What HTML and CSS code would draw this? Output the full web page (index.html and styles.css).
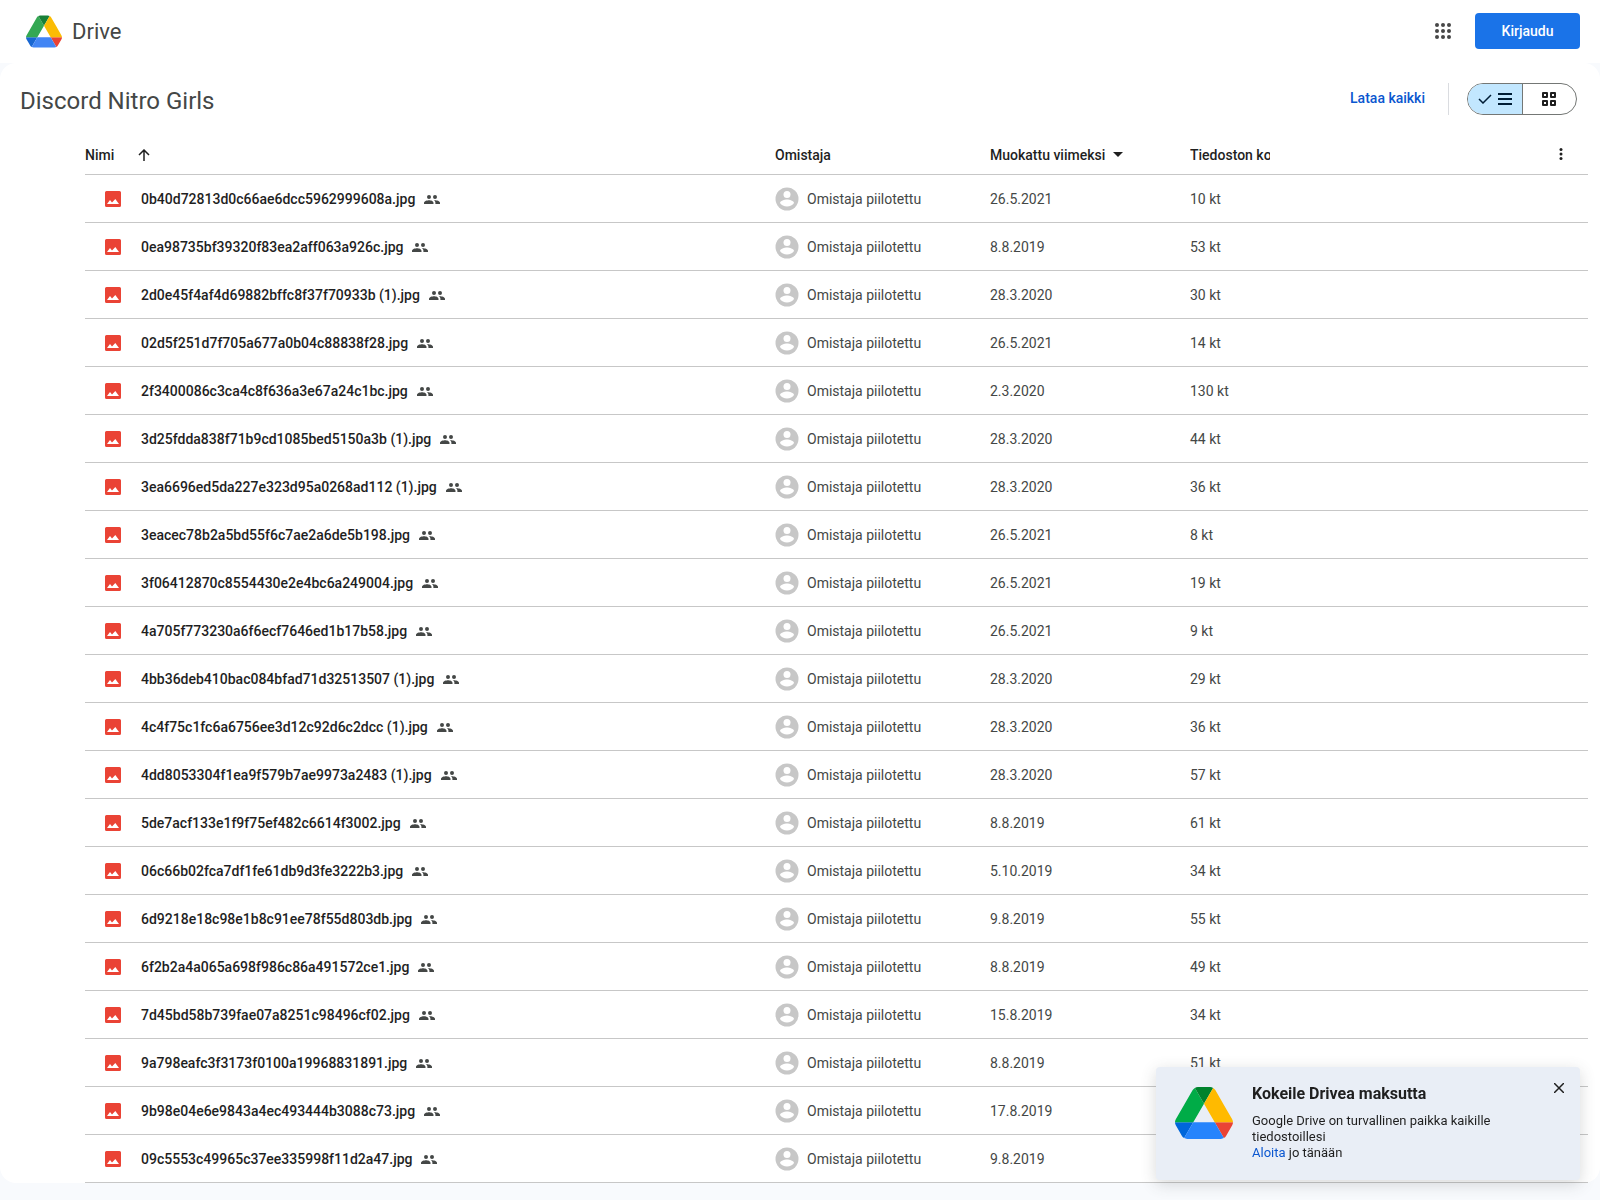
FILE: index.html
```
<!DOCTYPE html>
<html lang="fi">
<head>
<meta charset="utf-8">
<title>Discord Nitro Girls – Google Drive</title>
<link rel="stylesheet" href="styles.css">
</head>
<body>
<svg class="sprite" aria-hidden="true">
  <symbol id="image" viewBox="0 0 16 16"><path fill="#ea4335" d="M1.500 0h13A1.500 1.500 0 0 1 16 1.500v13a1.500 1.500 0 0 1-1.500 1.500h-13A1.500 1.500 0 0 1 0 14.500v-13A1.500 1.500 0 0 1 1.500 0z"/><path fill="#fff" d="M2 13l3-4 2 2.500L10.300 8 14 13z"/></symbol>
  <symbol id="people" viewBox="0 0 16 16"><path d="M5 8a2 2 0 1 0 0-4 2 2 0 0 0 0 4zM11 8a2 2 0 1 0 0-4 2 2 0 0 0 0 4zM5 9.200c-1.670 0-5 .83-5 2.500V13h9.500v-1.300C9.500 10.030 6.670 9.200 5 9.200zM11 9.200l-1.200.1c1 .6 1.600 1.400 1.600 2.400V13H16v-1.300c0-1.670-3.330-2.500-5-2.500z"/></symbol>
  <symbol id="person" viewBox="0 0 24 24"><circle cx="12" cy="12" r="11.500" fill="#c7c7c7"/><circle cx="12" cy="7.500" r="3.500" fill="#fff"/><path fill="#fff" d="M5 16c0-2.300 4.600-3.600 7-3.600s7 1.300 7 3.600c-1.400 2.200-4 3.600-7 3.600S6.400 18.200 5 16z"/></symbol>
</svg>

<header class="topbar">
  <a class="brand" href="#">
    <svg class="brand-logo" viewBox="0 0 87.3 78" aria-hidden="true">
      <path fill="#1967d2" d="m6.600 66.850 3.850 6.650c.8 1.400 1.950 2.500 3.300 3.300l13.750-23.800h-27.500c0 1.550.4 3.100 1.200 4.500z"/>
      <path fill="#34a853" d="m43.650 25-13.750-23.800c-1.350.8-2.500 1.900-3.300 3.300l-25.400 44a9.060 9.060 0 0 0-1.200 4.500h27.500z"/>
      <path fill="#ea4335" d="m73.550 76.800c1.350-.8 2.500-1.900 3.300-3.300l9.250-16c.8-1.400 1.200-2.950 1.200-4.500h-27.500z"/>
      <path fill="#188038" d="m43.650 25 13.750-23.800c-1.350-.8-2.900-1.200-4.500-1.200h-18.500c-1.600 0-3.150.45-4.500 1.200z"/>
      <path fill="#4285f4" d="m59.800 53h-32.300l-13.750 23.800c1.350.8 2.900 1.200 4.500 1.200h50.800c1.600 0 3.150-.45 4.500-1.200z"/>
      <path fill="#fbbc04" d="m73.400 26.500-12.700-22c-.8-1.400-1.950-2.500-3.300-3.300l-13.750 23.800 16.150 28h27.450c0-1.550-.4-3.100-1.200-4.500z"/>
    </svg>
    <span>Drive</span>
  </a>
  <div class="account">
    <button class="icon-button" type="button" aria-label="Google-sovellukset">
      <svg width="24" height="24" viewBox="0 0 24 24" fill="#474747"><circle cx="6" cy="6" r="2"/><circle cx="12" cy="6" r="2"/><circle cx="18" cy="6" r="2"/><circle cx="6" cy="12" r="2"/><circle cx="12" cy="12" r="2"/><circle cx="18" cy="12" r="2"/><circle cx="6" cy="18" r="2"/><circle cx="12" cy="18" r="2"/><circle cx="18" cy="18" r="2"/></svg>
    </button>
    <button class="sign-in" type="button">Kirjaudu</button>
  </div>
</header>

<main class="panel">
  <div class="toolbar">
    <h1 class="folder-title">Discord Nitro Girls</h1>
    <div class="actions">
      <button class="download" type="button">Lataa kaikki</button>
      <div class="view-toggle">
        <button class="view view-selected" type="button" aria-pressed="true" aria-label="Luettelo">
          <svg width="14" height="10" viewBox="0 0 14 10" fill="none" stroke="#001d35" stroke-width="1.500"><path d="M1 5l4 4 8-8"/></svg>
          <svg width="14" height="12" viewBox="0 0 14 12" fill="#001d35"><path d="M0 0h14v2H0zM0 5h14v2H0zM0 10h14v2H0z"/></svg>
        </button>
        <button class="view" type="button" aria-pressed="false" aria-label="Ruudukko">
          <svg width="14" height="14" viewBox="0 0 14 14" fill="none" stroke="#1f1f1f" stroke-width="2"><path stroke-linejoin="round" d="M1 1h4v4H1zM9 1h4v4H9zM1 9h4v4H1zM9 9h4v4H9z"/></svg>
        </button>
      </div>
    </div>
  </div>

  <table class="files">
    <thead>
      <tr>
        <th class="col-name"><div class="head">Nimi
          <svg class="sort-arrow" width="12" height="12" viewBox="0 0 12 12" fill="none" stroke="#1f1f1f" stroke-width="1.500"><path d="M6 12V1M1 6l5-5 5 5"/></svg></div></th>
        <th class="col-owner">Omistaja</th>
        <th class="col-date"><div class="head">Muokattu viimeksi
          <svg class="caret" width="10" height="5" viewBox="0 0 10 5"><path fill="#1f1f1f" d="M0 0h10L5 5z"/></svg></div></th>
        <th class="col-size"><div class="head-end"><span class="clipped">Tiedoston koko</span>
          <button class="icon-button more" type="button" aria-label="Lisää">
            <svg width="4" height="12" viewBox="0 0 4 12" fill="#1f1f1f"><circle cx="2" cy="1.500" r="1.500"/><circle cx="2" cy="6" r="1.500"/><circle cx="2" cy="10.500" r="1.500"/></svg>
          </button></div></th>
      </tr>
    </thead>
    <tbody>
      <tr><td><div class="file"><svg class="type"><use href="#image"/></svg>0b40d72813d0c66ae6dcc5962999608a.jpg<svg class="shared"><use href="#people"/></svg></div></td><td><div class="owner"><svg class="avatar"><use href="#person"/></svg>Omistaja piilotettu</div></td><td>26.5.2021</td><td>10 kt</td></tr>
      <tr><td><div class="file"><svg class="type"><use href="#image"/></svg>0ea98735bf39320f83ea2aff063a926c.jpg<svg class="shared"><use href="#people"/></svg></div></td><td><div class="owner"><svg class="avatar"><use href="#person"/></svg>Omistaja piilotettu</div></td><td>8.8.2019</td><td>53 kt</td></tr>
      <tr><td><div class="file"><svg class="type"><use href="#image"/></svg>2d0e45f4af4d69882bffc8f37f70933b (1).jpg<svg class="shared"><use href="#people"/></svg></div></td><td><div class="owner"><svg class="avatar"><use href="#person"/></svg>Omistaja piilotettu</div></td><td>28.3.2020</td><td>30 kt</td></tr>
      <tr><td><div class="file"><svg class="type"><use href="#image"/></svg>02d5f251d7f705a677a0b04c88838f28.jpg<svg class="shared"><use href="#people"/></svg></div></td><td><div class="owner"><svg class="avatar"><use href="#person"/></svg>Omistaja piilotettu</div></td><td>26.5.2021</td><td>14 kt</td></tr>
      <tr><td><div class="file"><svg class="type"><use href="#image"/></svg>2f3400086c3ca4c8f636a3e67a24c1bc.jpg<svg class="shared"><use href="#people"/></svg></div></td><td><div class="owner"><svg class="avatar"><use href="#person"/></svg>Omistaja piilotettu</div></td><td>2.3.2020</td><td>130 kt</td></tr>
      <tr><td><div class="file"><svg class="type"><use href="#image"/></svg>3d25fdda838f71b9cd1085bed5150a3b (1).jpg<svg class="shared"><use href="#people"/></svg></div></td><td><div class="owner"><svg class="avatar"><use href="#person"/></svg>Omistaja piilotettu</div></td><td>28.3.2020</td><td>44 kt</td></tr>
      <tr><td><div class="file"><svg class="type"><use href="#image"/></svg>3ea6696ed5da227e323d95a0268ad112 (1).jpg<svg class="shared"><use href="#people"/></svg></div></td><td><div class="owner"><svg class="avatar"><use href="#person"/></svg>Omistaja piilotettu</div></td><td>28.3.2020</td><td>36 kt</td></tr>
      <tr><td><div class="file"><svg class="type"><use href="#image"/></svg>3eacec78b2a5bd55f6c7ae2a6de5b198.jpg<svg class="shared"><use href="#people"/></svg></div></td><td><div class="owner"><svg class="avatar"><use href="#person"/></svg>Omistaja piilotettu</div></td><td>26.5.2021</td><td>8 kt</td></tr>
      <tr><td><div class="file"><svg class="type"><use href="#image"/></svg>3f06412870c8554430e2e4bc6a249004.jpg<svg class="shared"><use href="#people"/></svg></div></td><td><div class="owner"><svg class="avatar"><use href="#person"/></svg>Omistaja piilotettu</div></td><td>26.5.2021</td><td>19 kt</td></tr>
      <tr><td><div class="file"><svg class="type"><use href="#image"/></svg>4a705f773230a6f6ecf7646ed1b17b58.jpg<svg class="shared"><use href="#people"/></svg></div></td><td><div class="owner"><svg class="avatar"><use href="#person"/></svg>Omistaja piilotettu</div></td><td>26.5.2021</td><td>9 kt</td></tr>
      <tr><td><div class="file"><svg class="type"><use href="#image"/></svg>4bb36deb410bac084bfad71d32513507 (1).jpg<svg class="shared"><use href="#people"/></svg></div></td><td><div class="owner"><svg class="avatar"><use href="#person"/></svg>Omistaja piilotettu</div></td><td>28.3.2020</td><td>29 kt</td></tr>
      <tr><td><div class="file"><svg class="type"><use href="#image"/></svg>4c4f75c1fc6a6756ee3d12c92d6c2dcc (1).jpg<svg class="shared"><use href="#people"/></svg></div></td><td><div class="owner"><svg class="avatar"><use href="#person"/></svg>Omistaja piilotettu</div></td><td>28.3.2020</td><td>36 kt</td></tr>
      <tr><td><div class="file"><svg class="type"><use href="#image"/></svg>4dd8053304f1ea9f579b7ae9973a2483 (1).jpg<svg class="shared"><use href="#people"/></svg></div></td><td><div class="owner"><svg class="avatar"><use href="#person"/></svg>Omistaja piilotettu</div></td><td>28.3.2020</td><td>57 kt</td></tr>
      <tr><td><div class="file"><svg class="type"><use href="#image"/></svg>5de7acf133e1f9f75ef482c6614f3002.jpg<svg class="shared"><use href="#people"/></svg></div></td><td><div class="owner"><svg class="avatar"><use href="#person"/></svg>Omistaja piilotettu</div></td><td>8.8.2019</td><td>61 kt</td></tr>
      <tr><td><div class="file"><svg class="type"><use href="#image"/></svg>06c66b02fca7df1fe61db9d3fe3222b3.jpg<svg class="shared"><use href="#people"/></svg></div></td><td><div class="owner"><svg class="avatar"><use href="#person"/></svg>Omistaja piilotettu</div></td><td>5.10.2019</td><td>34 kt</td></tr>
      <tr><td><div class="file"><svg class="type"><use href="#image"/></svg>6d9218e18c98e1b8c91ee78f55d803db.jpg<svg class="shared"><use href="#people"/></svg></div></td><td><div class="owner"><svg class="avatar"><use href="#person"/></svg>Omistaja piilotettu</div></td><td>9.8.2019</td><td>55 kt</td></tr>
      <tr><td><div class="file"><svg class="type"><use href="#image"/></svg>6f2b2a4a065a698f986c86a491572ce1.jpg<svg class="shared"><use href="#people"/></svg></div></td><td><div class="owner"><svg class="avatar"><use href="#person"/></svg>Omistaja piilotettu</div></td><td>8.8.2019</td><td>49 kt</td></tr>
      <tr><td><div class="file"><svg class="type"><use href="#image"/></svg>7d45bd58b739fae07a8251c98496cf02.jpg<svg class="shared"><use href="#people"/></svg></div></td><td><div class="owner"><svg class="avatar"><use href="#person"/></svg>Omistaja piilotettu</div></td><td>15.8.2019</td><td>34 kt</td></tr>
      <tr><td><div class="file"><svg class="type"><use href="#image"/></svg>9a798eafc3f3173f0100a19968831891.jpg<svg class="shared"><use href="#people"/></svg></div></td><td><div class="owner"><svg class="avatar"><use href="#person"/></svg>Omistaja piilotettu</div></td><td>8.8.2019</td><td>51 kt</td></tr>
      <tr><td><div class="file"><svg class="type"><use href="#image"/></svg>9b98e04e6e9843a4ec493444b3088c73.jpg<svg class="shared"><use href="#people"/></svg></div></td><td><div class="owner"><svg class="avatar"><use href="#person"/></svg>Omistaja piilotettu</div></td><td>17.8.2019</td><td></td></tr>
      <tr><td><div class="file"><svg class="type"><use href="#image"/></svg>09c5553c49965c37ee335998f11d2a47.jpg<svg class="shared"><use href="#people"/></svg></div></td><td><div class="owner"><svg class="avatar"><use href="#person"/></svg>Omistaja piilotettu</div></td><td>9.8.2019</td><td></td></tr>
    </tbody>
  </table>
</main>

<aside class="promo">
  <svg class="promo-logo" viewBox="0 0 87.3 78" aria-hidden="true">
    <path fill="#0066da" d="m6.600 66.850 3.850 6.650c.8 1.400 1.950 2.500 3.300 3.300l13.750-23.800h-27.500c0 1.550.4 3.100 1.200 4.500z"/>
    <path fill="#00ac47" d="m43.650 25-13.750-23.800c-1.350.8-2.500 1.900-3.300 3.300l-25.400 44a9.060 9.060 0 0 0-1.200 4.500h27.500z"/>
    <path fill="#ea4335" d="m73.550 76.800c1.350-.8 2.500-1.900 3.300-3.300l9.250-16c.8-1.400 1.200-2.950 1.200-4.500h-27.500z"/>
    <path fill="#00832d" d="m43.650 25 13.750-23.800c-1.350-.8-2.900-1.200-4.500-1.200h-18.500c-1.600 0-3.150.45-4.500 1.200z"/>
    <path fill="#2684fc" d="m59.800 53h-32.300l-13.750 23.800c1.350.8 2.900 1.200 4.500 1.200h50.800c1.600 0 3.150-.45 4.500-1.200z"/>
    <path fill="#ffba00" d="m73.400 26.500-12.700-22c-.8-1.400-1.950-2.500-3.300-3.300l-13.750 23.800 16.150 28h27.450c0-1.550-.4-3.100-1.200-4.500z"/>
  </svg>
  <div class="promo-copy">
    <h2 class="promo-title">Kokeile Drivea maksutta</h2>
    <p class="promo-text">Google Drive on turvallinen paikka kaikille tiedostoillesi<br><a class="promo-link" href="#">Aloita</a> jo tänään</p>
  </div>
  <button class="icon-button close" type="button" aria-label="Sulje">
    <svg width="10" height="10" viewBox="0 0 10 10" fill="none" stroke="#1f1f1f" stroke-width="1.500"><path d="M0 0l10 10M10 0L0 10"/></svg>
  </button>
</aside>
</body>
</html>
```
FILE: styles.css
```
* {
  box-sizing: border-box;
}

body {
  margin: 0;
  padding-bottom: 16px;
  background: #f8fafd;
  color: #1f1f1f;
  font-family: Roboto, sans-serif;
  font-size: 14px;
}

button {
  margin: 0;
  padding: 0;
  border: 0;
  background: none;
  color: inherit;
  font: inherit;
  cursor: pointer;
}

svg {
  display: block;
  flex: none;
}

.sprite {
  position: absolute;
  width: 0;
  height: 0;
}

.topbar {
  display: flex;
  align-items: center;
  justify-content: space-between;
  height: 63px;
  padding: 0 20px 1px 26px;
  background: #fff;
}

.brand {
  display: flex;
  align-items: center;
  gap: 10px;
  color: #444746;
  font-size: 22px;
  text-decoration: none;
}

.brand-logo {
  width: 36px;
  height: 33px;
}

.account {
  display: flex;
  align-items: center;
  gap: 12px;
}

.icon-button {
  display: grid;
  place-items: center;
  width: 40px;
  height: 40px;
  border-radius: 50%;
}

.sign-in {
  min-width: 105px;
  height: 36px;
  padding: 0 24px;
  border-radius: 4px;
  background: #1a73e8;
  color: #fff;
  font-weight: 500;
}

.panel {
  border-radius: 16px;
  background: #fff;
}

.toolbar {
  display: flex;
  align-items: center;
  justify-content: space-between;
  height: 72px;
  padding: 0 23px 0 20px;
}

.folder-title {
  margin: 0;
  padding-top: 4px;
  color: #444746;
  font-size: 24px;
  font-weight: 400;
}

.actions {
  display: flex;
  align-items: center;
}

.download {
  height: 32px;
  padding: 0 23px 2px;
  border-right: 1px solid #dadce0;
  color: #0b57d0;
  font-weight: 500;
}

.view-toggle {
  display: flex;
  width: 110px;
  height: 32px;
  margin-left: 18px;
  overflow: hidden;
  border: 1px solid #747775;
  border-radius: 16px;
}

.view {
  display: flex;
  flex: 1;
  align-items: center;
  justify-content: center;
  gap: 6px;
}

.view-selected {
  border-right: 1px solid #747775;
  background: #c2e7ff;
}

.files {
  width: calc(100% - 97px);
  margin-left: 85px;
  border-collapse: separate;
  border-spacing: 0;
  table-layout: fixed;
}

.files th,
.files td {
  height: 48px;
  padding: 0;
  border-bottom: 1px solid #c7c7c7;
  text-align: left;
  white-space: nowrap;
}

.files th {
  height: 40px;
  font-weight: 500;
}

.files td {
  color: #444746;
}

.col-owner {
  width: 215px;
}

.col-date {
  width: 200px;
}

.col-size {
  width: 398px;
}

.head,
.head-end,
.file,
.owner {
  display: flex;
  align-items: center;
}

.head-end {
  justify-content: space-between;
}

.sort-arrow {
  margin-left: 24px;
}

.caret {
  margin-left: 8px;
}

.clipped {
  width: 80px;
  overflow: hidden;
}

.more {
  width: 24px;
  height: 24px;
  margin-right: 15px;
  padding-bottom: 2px;
}

.file {
  padding-left: 20px;
  color: #1f1f1f;
  font-weight: 500;
}

.type {
  width: 16px;
  height: 16px;
  margin-right: 20px;
}

.shared {
  width: 16px;
  height: 16px;
  margin-left: 9px;
  fill: #444746;
}

.owner {
  gap: 8px;
}

.avatar {
  width: 24px;
  height: 24px;
}

.promo {
  position: fixed;
  right: 20px;
  bottom: 20px;
  display: flex;
  align-items: flex-start;
  width: 424px;
  padding: 16px 8px 19px 19px;
  border-radius: 4px;
  background: #e9eef6;
  box-shadow: 0 4px 16px rgba(60, 64, 67, 0.2);
}

.promo-logo {
  width: 58px;
  height: 52px;
  margin-top: 4px;
}

.promo-copy {
  flex: 1;
  padding-left: 19px;
}

.promo-title {
  margin: 0 0 8px;
  font-size: 16px;
  font-weight: 700;
  line-height: 22px;
}

.promo-text {
  max-width: 260px;
  margin: 0;
  font-size: 13px;
  line-height: 16px;
}

.promo-link {
  color: #0b57d0;
  text-decoration: none;
}

.close {
  width: 26px;
  height: 8px;
}
```
